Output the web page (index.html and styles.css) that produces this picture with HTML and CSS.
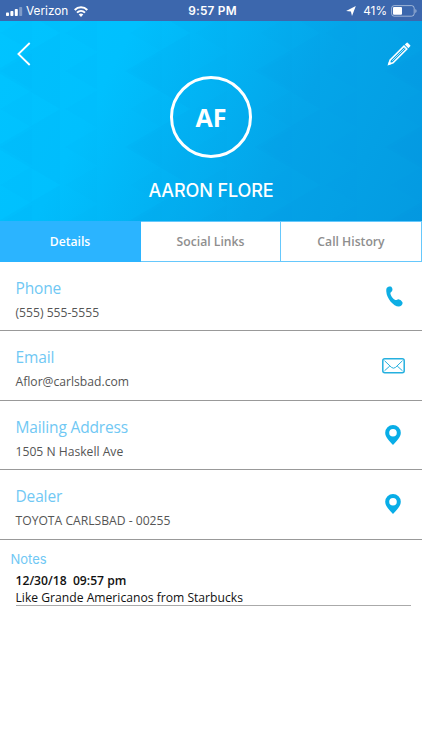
FILE: index.html
```html
<!DOCTYPE html>
<html lang="en">
<head>
  <meta charset="UTF-8" />
  <meta name="viewport" content="width=device-width, initial-scale=1" />
  <title>Contact Details</title>
  <link rel="stylesheet" href="styles.css">
</head>
<body>

<!-- Status bar -->
<div class="status">
  <div class="status-left">
    <svg width="17" height="9" viewBox="0 0 17 9" fill="#fff">
      <rect x="0" y="5.5" width="3" height="3.5" rx="0.8"/>
      <rect x="4.4" y="4" width="3" height="5" rx="0.8"/>
      <rect x="8.8" y="2" width="3" height="7" rx="0.8"/>
      <rect x="13.2" y="0" width="3" height="9" rx="0.8" opacity="0.35"/>
    </svg>
    <span class="carrier">Verizon</span>
    <svg width="14" height="11" viewBox="0 0 14 11" fill="none" stroke="#fff" stroke-width="2">
      <path d="M0.7 4C4.2 0.4 9.8 0.4 13.3 4"/>
      <path d="M3 6.6C5.3 4.4 8.7 4.4 11 6.6"/>
      <path d="M4.7 8.5C6 7.3 8 7.3 9.3 8.5L7 10.9Z" fill="#fff" stroke="none"/>
    </svg>
  </div>
  <span class="time">9:57 PM</span>
  <div class="status-right">
    <svg width="10" height="10" viewBox="0 0 10 10" fill="#fff"><path d="M9.8 0.1L6 9.9L4.9 5.4L0.1 5Z"/></svg>
    <span class="percent">41%</span>
    <svg width="26" height="12" viewBox="0 0 26 12">
      <rect x="0.6" y="0.6" width="22.6" height="10.6" rx="2.6" fill="none" stroke="#fff" stroke-opacity="0.5" stroke-width="1"/>
      <rect x="2" y="2" width="9" height="7.8" rx="1" fill="#fff"/>
      <path d="M24.3 4V8C26 7.3 26 4.7 24.3 4Z" fill="#fff" fill-opacity="0.5"/>
    </svg>
  </div>
</div>

<header>
  <svg class="pattern" width="422" height="200">
    <defs>
      <pattern id="tri" x="0" y="-7" width="65" height="38" patternUnits="userSpaceOnUse">
        <path d="M32.5 0V38L0 19Z" fill="#0070c8" fill-opacity="0.025"/>
      </pattern>
      <pattern id="triBig" x="-5" y="12" width="130" height="76" patternUnits="userSpaceOnUse">
        <path d="M65 0V76L0 38Z" fill="#0070c8" fill-opacity="0.03"/>
      </pattern>
    </defs>
    <rect width="422" height="200" fill="url(#tri)"/>
    <rect width="422" height="200" fill="url(#triBig)"/>
  </svg>
  <div class="actions">
    <svg width="14" height="24" viewBox="0 0 14 24" fill="none" stroke="#fff" stroke-width="1.8"><path d="M12.7 1L1.4 12L12.7 23"/></svg>
    <svg width="24" height="24" viewBox="0 0 24 24" fill="none" stroke="#fff" stroke-width="1.6">
      <path d="M1.8 22.2L3.2 18L17 4.2L19.8 7L6 20.8Z"/>
      <path d="M5.2 18.8L17.6 6.4" stroke-width="0.7"/>
      <path d="M17.8 2.6L19.7 0.8Q20.2 0.3 20.7 0.8L23.2 3.3Q23.7 3.8 23.2 4.3L21.4 6.2Z" fill="#fff" stroke="none"/>
      <path d="M0.8 23.2L2.2 19L5 21.8Z" fill="#fff" stroke="none"/>
    </svg>
  </div>
  <div class="avatar">AF</div>
  <h1>AARON FLORE</h1>
</header>

<nav>
  <a class="active">Details</a>
  <a>Social Links</a>
  <a>Call History</a>
</nav>

<section class="row">
  <div>
    <h2>Phone</h2>
    <p>(555) 555-5555</p>
  </div>
  <svg class="phone" width="17" height="21" viewBox="0 0 17 21" fill="#0eaee4">
    <path d="M1.1 1.5C2.1 .5 4.2 0 5.3 .8C6.4 1.8 6.8 3.7 6.2 4.8C5.7 5.8 4.5 6 4.4 7.2C4.3 9.3 7.2 13.2 9.3 14C10.6 14.5 11.2 13.2 12.4 13.3C14 13.5 16.5 15.5 16.6 16.9C16.7 18.7 14.6 20.3 12.8 20.4C7.7 20.5 .6 12.5 .3 5.4C.2 3.7 .3 2.3 1.1 1.5Z"/>
  </svg>
</section>

<section class="row">
  <div>
    <h2>Email</h2>
    <p>Aflor@carlsbad.com</p>
  </div>
  <svg class="mail" width="23" height="16" viewBox="0 0 23 16" fill="none" stroke="#25b0df">
    <rect x="0.8" y="0.8" width="21.4" height="14" rx="2" stroke-width="1.5"/>
    <path d="M2.5 2.7L9.5 9.4Q11.5 11 13.5 9.4L20.5 2.7M2.5 12.8L7.8 8M20.5 12.8L15.2 8" stroke-width="1"/>
  </svg>
</section>

<section class="row">
  <div>
    <h2>Mailing Address</h2>
    <p>1505 N Haskell Ave</p>
  </div>
  <svg class="pin" width="16" height="20" viewBox="0 0 16 20" fill="#08ade7">
    <path fill-rule="evenodd" d="M8 0A7.8 7.8 0 0 0 .2 7.8C.2 12.4 4.4 15.9 8 20C11.6 15.9 15.8 12.4 15.8 7.8A7.8 7.8 0 0 0 8 0ZM8 4A3.8 3.8 0 1 1 8 11.6A3.8 3.8 0 1 1 8 4Z"/>
  </svg>
</section>

<section class="row">
  <div>
    <h2>Dealer</h2>
    <p>TOYOTA CARLSBAD - 00255</p>
  </div>
  <svg class="pin" width="16" height="20" viewBox="0 0 16 20" fill="#08ade7">
    <path fill-rule="evenodd" d="M8 0A7.8 7.8 0 0 0 .2 7.8C.2 12.4 4.4 15.9 8 20C11.6 15.9 15.8 12.4 15.8 7.8A7.8 7.8 0 0 0 8 0ZM8 4A3.8 3.8 0 1 1 8 11.6A3.8 3.8 0 1 1 8 4Z"/>
  </svg>
</section>

<section class="notes">
  <h3>Notes</h3>
  <div class="note">
    <strong>12/30/18&nbsp; 09:57 pm</strong>
    <p>Like Grande Americanos from Starbucks</p>
  </div>
</section>

</body>
</html>
```
FILE: styles.css
```css
* {
  box-sizing: border-box;
}

body {
  margin: 0;
  font-family: "Open Sans", sans-serif;
  background: #fff;
}

h1, h2, h3, p {
  margin: 0;
  font-weight: normal;
}

svg {
  display: block;
  flex-shrink: 0;
}

.status {
  height: 21px;
  display: grid;
  grid-template-columns: 1fr auto 1fr;
  align-items: center;
  padding: 1px 5px 0 6px;
  background: #3c67ad;
  color: #fff;
  font-family: Inter, sans-serif;
  font-size: 12px;
  line-height: 20px;
}

.status-left, .status-right {
  display: flex;
  align-items: center;
}

.status-right {
  justify-content: flex-end;
}

.carrier {
  margin: 0 6px 0 3px;
  font-size: 11.8px;
}

.time {
  margin-left: 2px;
  font-weight: 600;
  font-size: 11.8px;
  letter-spacing: 0.25px;
}

.percent {
  margin: 0 4px 0 7px;
  font-size: 11.8px;
}

header {
  position: relative;
  height: 200px;
  background: linear-gradient(117deg, #00c4ff 0%, #00c0fe 26%, #04a5e9 66%, #049be1 100%);
  color: #fff;
  display: flex;
  flex-direction: column;
  align-items: center;
}

.pattern {
  position: absolute;
  top: 0;
  left: 0;
}

.actions {
  position: relative;
  width: 100%;
  height: 55px;
  padding: 21px 11px 0 17px;
  display: flex;
  justify-content: space-between;
}

.avatar {
  position: relative;
  width: 82px;
  height: 82px;
  border: 3px solid #fff;
  border-radius: 50%;
  line-height: 77px;
  text-align: center;
  font-size: 25px;
  font-weight: bold;
}

header h1 {
  position: relative;
  margin-top: 21px;
  font-family: Inter, sans-serif;
  font-size: 18px;
  line-height: 24px;
  font-weight: 500;
  letter-spacing: -0.1px;
}

nav {
  height: 41px;
  display: grid;
  grid-template-columns: 141px 140px 141px;
  border-top: 1px solid #66c8fc;
  border-bottom: 1px solid #66c8fc;
}

nav a {
  border-right: 1px solid #66c8fc;
  color: #8e8e8e;
  font-size: 12.2px;
  font-weight: 600;
  line-height: 39px;
  text-align: center;
}

nav a.active {
  margin: -1px 0 0;
  background: #2bb4ff;
  border-color: #2bb4ff;
  color: #fff;
  line-height: 41px;
}

.row {
  height: 69.5px;
  padding: 15px 16px 0 15.5px;
  display: flex;
  justify-content: space-between;
  border-bottom: 1px solid #999;
}

.row:first-of-type {
  height: 69px;
}

.row h2 {
  color: #70c8f4;
  font-size: 15.5px;
  line-height: 23px;
  letter-spacing: -0.15px;
}

.row p {
  margin-top: 3px;
  color: #555;
  font-size: 12.15px;
  line-height: 19px;
}

.phone {
  margin: 9px 3px 0 0;
}

.mail {
  margin: 12px 1px 0 0;
}

.pin {
  margin: 9px 5px 0 0;
}

.notes {
  padding: 9px 11px 0 10.5px;
}

.notes h3 {
  color: #70c8f4;
  font-family: Inter, sans-serif;
  font-size: 13px;
  line-height: 20px;
}

.note {
  margin-left: 5px;
  border-bottom: 1px solid #aaa;
  color: #111;
  font-size: 12.15px;
  line-height: 17px;
  padding: 3px 0 0;
}

.note strong {
  display: block;
  font-weight: 600;
}

.note p {
  height: 16px;
}
```
